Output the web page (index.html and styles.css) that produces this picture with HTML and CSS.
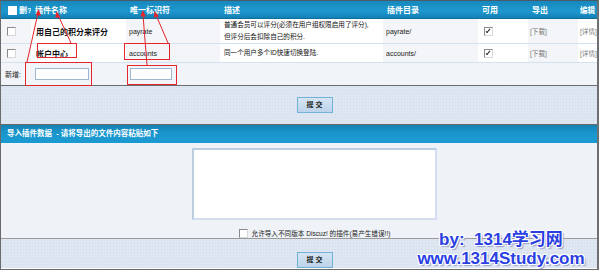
FILE: index.html
```html
<!DOCTYPE html>
<html lang="zh">

<head>
    <meta charset="UTF-8">
    <title>插件管理</title>
    <link rel="stylesheet" href="styles.css">
</head>

<body>
    <div class="wrap">
        <!-- plugin list -->
        <table class="plugins">
            <colgroup>
                <col style="width:30px">
                <col style="width:95px">
                <col style="width:94px">
                <col style="width:163px">
                <col style="width:95px">
                <col style="width:50px">
                <col style="width:50px">
                <col>
            </colgroup>
            <tr class="head">
                <th class="c-del"><span class="box white"></span>删?</th>
                <th>插件名称</th>
                <th>唯一标识符</th>
                <th>描述</th>
                <th>插件目录</th>
                <th>可用</th>
                <th>导出</th>
                <th class="c-last">编辑</th>
            </tr>
            <tr class="row r1">
                <td class="alt"><span class="box"></span></td>
                <td class="name">用自己的积分来评分</td>
                <td class="alt lat">payrate</td>
                <td class="desc">普通会员可以评分(必须在用户组权限启用了评分),<br>但评分后会扣除自己的积分.</td>
                <td class="alt lat">payrate/</td>
                <td><span class="box checked"></span></td>
                <td class="alt link">[下载]</td>
                <td class="link">[详情]</td>
            </tr>
            <tr class="row r2">
                <td class="alt"><span class="box"></span></td>
                <td class="name">帐户中心</td>
                <td class="alt lat">accounts</td>
                <td class="desc">同一个用户多个ID快速切换登陆.</td>
                <td class="alt lat">accounts/</td>
                <td><span class="box checked"></span></td>
                <td class="alt link">[下载]</td>
                <td class="link">[详情]</td>
            </tr>
            <tr class="row r3">
                <td class="label">新增:</td>
                <td><span class="field"></span></td>
                <td><span class="field short"></span></td>
                <td colspan="5"></td>
            </tr>
        </table>

        <div class="bar top-bar">
            <span class="btn">提 交</span>
        </div>

        <!-- import -->
        <div class="import">
            <div class="import-head">导入插件数据 &nbsp;- 请将导出的文件内容粘贴如下</div>
            <div class="import-body">
                <div class="area"></div>
                <div class="allow"><span class="box"></span>允许导入不同版本 Discuz! 的插件(易产生错误!!)</div>
            </div>
            <div class="bar bottom-bar">
                <span class="btn">提 交</span>
            </div>
        </div>

        <div class="mark">
            <div>by: &nbsp;1314学习网</div>
            <div>www.1314Study.com</div>
        </div>

        <!-- red notes drawn on top -->
        <svg class="notes" width="599" height="270" viewBox="0 0 599 270">
            <g fill="none" stroke="#e3262c" stroke-width="1">
                <rect x="37.5" y="43.5" width="39" height="14"/>
                <rect x="124.5" y="43.5" width="45" height="16"/>
                <rect x="25.5" y="62.5" width="66" height="23"/>
                <rect x="127.5" y="65.5" width="49" height="19"/>
                <line x1="27" y1="62" x2="38" y2="13"/>
                <line x1="71" y1="43" x2="58" y2="15"/>
                <line x1="147" y1="65" x2="143" y2="15"/>
                <line x1="168" y1="43" x2="156" y2="15"/>
            </g>
            <g fill="#e3262c">
                <polygon points="38.6,9 41,16 35.6,15"/>
                <polygon points="56.4,11 60.5,17 55.3,18"/>
                <polygon points="142.8,10 145.8,16.5 140.3,16.6"/>
                <polygon points="154.6,11 159,16.2 153.8,17.8"/>
            </g>
        </svg>
    </div>
</body>

</html>
```

FILE: styles.css
```css
body {
    margin: 0;
    padding: 0;
    background: #fff;
    font-family: "Liberation Sans", "Noto Sans CJK SC", sans-serif;
    color: #111;
}

.wrap {
    position: relative;
    width: 596px;
    height: 268px;
    border-top: 1px solid #4a5a66;
    border-left: 1px solid #6a6a6a;
    border-right: 2px solid #707070;
    border-bottom: 1px solid #6a6a6a;
    overflow: hidden;
}

.plugins {
    width: 596px;
    border-collapse: collapse;
    table-layout: fixed;
}

.plugins td,
.plugins th {
    padding: 0 0 0 4px;
    text-align: left;
    white-space: nowrap;
    overflow: hidden;
}

.head th {
    height: 17px;
    background: linear-gradient(#1788bd, #1d98cf 60%, #1480b4);
    color: #fff;
    font-size: 8px;
    font-weight: bold;
    border-bottom: 1px solid #0e6f9c;
}

.head .c-del {
    padding-left: 7px;
}

.head .c-last {
    padding-left: 2px;
    font-size: 7.5px;
}

.row td {
    font-size: 7px;
    border-bottom: 1px solid #d5e1ee;
    background: #fff;
}

.row td.alt {
    background: #f3f5f8;
}

.r1 td {
    height: 24px;
}

.r2 td {
    height: 18px;
}

.r3 td {
    height: 22px;
    background: #f1f4f8;
    border-bottom: 1px solid #6b6b6b;
}

.row .name {
    font-weight: bold;
    font-size: 8px;
    padding-left: 5px;
}

.row .lat {
    padding-left: 3px;
    color: #222;
}

.row .desc {
    font-size: 6.6px;
    line-height: 12px;
    padding-left: 4px;
}

.row .link {
    color: #777;
    font-size: 6.6px;
    padding-left: 2px;
}

.row .label {
    padding-left: 4px;
    font-size: 7px;
    color: #222;
}

.box {
    display: inline-block;
    width: 7px;
    height: 7px;
    border: 1px solid #8a8a8a;
    border-right-color: #d8d8d8;
    border-bottom-color: #d8d8d8;
    background: #fff;
    vertical-align: middle;
    margin: 0 3px 0 2px;
    position: relative;
}

.box.white {
    border-color: #fff;
    margin-left: 0;
    margin-right: 2px;
}

.box.checked::after {
    content: "";
    position: absolute;
    left: 2px;
    top: 0;
    width: 1px;
    height: 4px;
    border: solid #222;
    border-width: 0 1.5px 1.5px 0;
    transform: rotate(40deg);
}

.field {
    display: inline-block;
    width: 52px;
    height: 10px;
    border: 1px solid #9fb6cf;
    background: #fff;
    vertical-align: middle;
}

.field.short {
    width: 40px;
}

.bar {
    background-color: #dde6f1;
    background-image: radial-gradient(#d2dcea 0.6px, transparent 0.7px);
    background-size: 3px 3px;
    display: flex;
    justify-content: center;
    padding-left: 31px;
}

.top-bar {
    height: 38px;
    align-items: center;
}

.btn {
    display: inline-block;
    width: 34px;
    height: 14px;
    line-height: 14px;
    text-align: center;
    font-size: 7px;
    font-weight: bold;
    color: #222;
    background: linear-gradient(#d5e5f4, #bcd3ea);
    border: 1px solid #73b2d8;
}

.import {
    border-top: 1px solid #6b6b6b;
}

.import-head {
    height: 18px;
    line-height: 18px;
    padding-left: 6px;
    color: #fff;
    font-size: 7.5px;
    font-weight: bold;
    background: linear-gradient(#1381b4, #1a96cd 45%, #1b9ad2);
}

.import-body {
    height: 95px;
    background: #eff3f8;
    display: flex;
    flex-direction: column;
    align-items: center;
    padding-left: 31px;
    border-bottom: 1px solid #9a9a9a;
}

.area {
    width: 241px;
    height: 69px;
    margin-top: 5px;
    background: #fff;
    border: 2px solid #bccde0;
    border-right-color: #d2def0;
    border-bottom-color: #d2def0;
}

.allow {
    margin-top: 8px;
    font-size: 6.6px;
    color: #222;
    display: flex;
    align-items: center;
}

.allow .box {
    margin: 0 4px 0 0;
}

.bottom-bar {
    height: 29px;
    align-items: flex-end;
}

.mark {
    position: absolute;
    left: 405px;
    top: 229px;
    width: 190px;
    text-align: center;
    font-family: "Liberation Sans", "Noto Sans CJK SC", sans-serif;
    font-weight: bold;
    font-size: 17px;
    line-height: 19px;
    color: #2a3fe2;
    text-shadow: 1px 1px 0 #fff, -1px -1px 0 #fff, 1px -1px 0 #fff, -1px 1px 0 #fff, 2px 2px 1px #9aa0c8;
}

.notes {
    position: absolute;
    left: -1px;
    top: -1px;
}
```
